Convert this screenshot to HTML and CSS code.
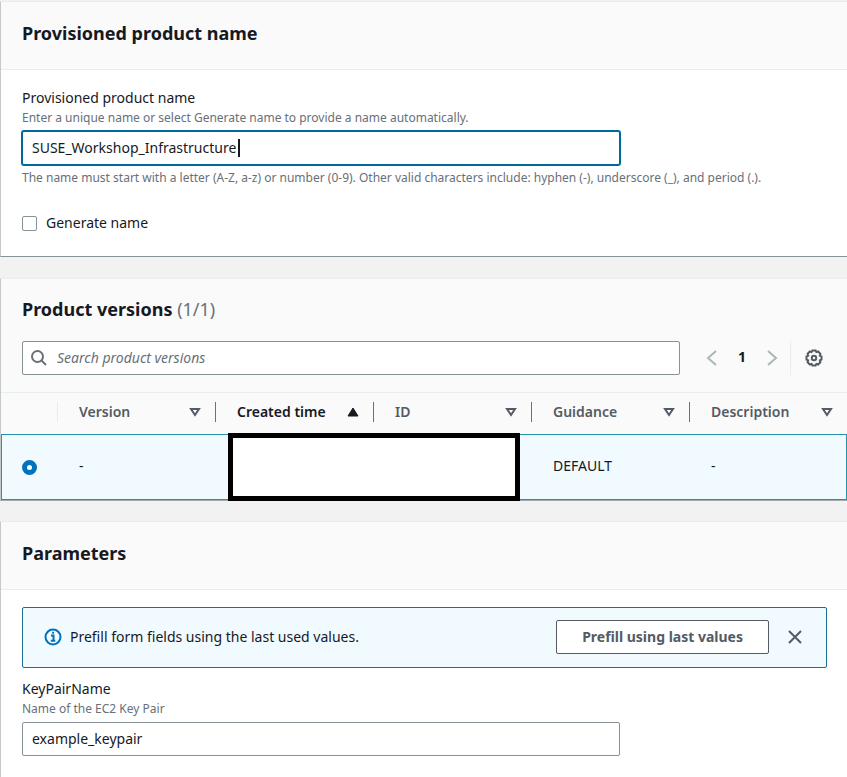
FILE: index.html
```html
<!DOCTYPE html>
<html lang="en">
<head>
<meta charset="utf-8">
<title>Launch product</title>
<meta name="viewport" content="width=device-width, initial-scale=1">
<link rel="stylesheet" href="styles.css">
</head>
<body>
<main class="page">
  <section class="panel">
    <header class="panel-header"><h2>Provisioned product name</h2></header>
    <div class="panel-body">
      <div class="field">
        <label class="label" for="product-name">Provisioned product name</label>
        <p class="hint">Enter a unique name or select Generate name to provide a name automatically.</p>
        <div class="input-wrap">
          <input class="input input-focused" id="product-name" type="text" value="SUSE_Workshop_Infrastructure">
          <span class="caret"></span>
        </div>
        <p class="hint">The name must start with a letter (A-Z, a-z) or number (0-9). Other valid characters include: hyphen (-), underscore (_), and period (.).</p>
      </div>
      <label class="check"><input type="checkbox">Generate name</label>
    </div>
  </section>

  <section class="panel panel-table">
    <div class="versions-header">
      <h2>Product versions <span class="count">(1/1)</span></h2>
      <div class="tools">
        <div class="search">
          <svg class="search-icon" viewBox="0 0 16 16" aria-hidden="true"><circle cx="6.5" cy="6.5" r="5.5"/><path d="M10.5 10.5 15 15"/></svg>
          <input class="input" type="search" aria-label="Search product versions" placeholder="Search product versions">
        </div>
        <nav class="pager" aria-label="Pages">
          <button class="icon-button" type="button" aria-label="Previous page"><svg class="chevron" viewBox="0 0 16 16"><path d="M12 1 4 8l8 7"/></svg></button>
          <button class="icon-button page-number" type="button">1</button>
          <button class="icon-button" type="button" aria-label="Next page"><svg class="chevron" viewBox="0 0 16 16"><path d="m4 1 8 7-8 7"/></svg></button>
        </nav>
        <div class="settings">
          <button class="icon-button" type="button" aria-label="Preferences"><svg class="gear" viewBox="0 0 18 18"><path d="M7.4 1.500h3.200l.8 1.600 1.700-.6 2.300 2.300-.6 1.800 1.700.8v3.200l-1.700.8.6 1.800-2.300 2.300-1.700-.6-.8 1.600H7.400l-.8-1.600-1.700.6-2.300-2.300.6-1.800-1.700-.8V7.400l1.700-.8-.6-1.800 2.300-2.300 1.700.6z"/><circle cx="9" cy="9" r="2.200"/></svg></button>
        </div>
      </div>
    </div>
    <table class="versions">
      <colgroup><col class="col-select"><col><col><col><col><col></colgroup>
      <thead>
        <tr>
          <th aria-label="Select"></th>
          <th><button class="sort" type="button">Version<svg viewBox="0 0 12 10"><path d="M2 2h8L6 8z"/></svg></button></th>
          <th><button class="sort sorted" type="button">Created time<svg viewBox="0 0 12 10"><path d="M6 1 11 9H1z"/></svg></button></th>
          <th><button class="sort" type="button">ID<svg viewBox="0 0 12 10"><path d="M2 2h8L6 8z"/></svg></button></th>
          <th><button class="sort" type="button">Guidance<svg viewBox="0 0 12 10"><path d="M2 2h8L6 8z"/></svg></button></th>
          <th><button class="sort" type="button">Description<svg viewBox="0 0 12 10"><path d="M2 2h8L6 8z"/></svg></button></th>
        </tr>
      </thead>
      <tbody>
        <tr>
          <td><input class="radio" type="radio" name="version" aria-label="Select version" checked></td>
          <td>-</td>
          <td class="masked" colspan="2"><div class="mask"></div></td>
          <td>DEFAULT</td>
          <td>-</td>
        </tr>
      </tbody>
    </table>
  </section>

  <section class="panel panel-last">
    <header class="panel-header"><h2>Parameters</h2></header>
    <div class="panel-body">
      <div class="alert">
        <svg class="info" viewBox="0 0 18 18" aria-hidden="true"><circle cx="9" cy="9" r="7.500"/><path d="M7 7.500h2.500v5M6.800 12.800h4.500"/><path d="M8.200 4.800h1.800"/></svg>
        <p class="alert-text">Prefill form fields using the last used values.</p>
        <button class="button" type="button">Prefill using last values</button>
        <button class="icon-button close" type="button" aria-label="Dismiss"><svg viewBox="0 0 16 16"><path d="m2 2 12 12M14 2 2 14"/></svg></button>
      </div>
      <div class="field">
        <label class="label" for="key-pair">KeyPairName</label>
        <p class="hint">Name of the EC2 Key Pair</p>
        <div class="input-wrap"><input class="input" id="key-pair" type="text" value="example_keypair"></div>
      </div>
    </div>
  </section>
</main>
</body>
</html>
```
FILE: styles.css
```css
* { box-sizing: border-box; }
body {
  margin: 0;
  background: #f2f2f2;
  color: #16191f;
  font: 14px/20px "Noto Sans", "Open Sans", sans-serif;
}
h2, p { margin: 0; }
h2 { font-size: 18px; line-height: 24px; font-weight: 700; }
input, button { font: inherit; color: inherit; }
svg { display: block; fill: none; stroke: currentColor; stroke-width: 2; }

.page { display: flex; flex-direction: column; gap: 21px; padding-top: 1px; min-height: 100vh; }
.panel {
  background: #fff;
  border-top: 1px solid #eaeded;
  border-left: 1px solid #c4c9cb;
  border-bottom: 1px solid #879196;
}
.panel-table { border-bottom: 0; box-shadow: 0 1px #a3abae; }
.panel-last { flex: 1; border-bottom: 0; }
.panel-header { padding: 19px 21px 24px; background: #fafafa; border-bottom: 1px solid #eaeded; }
.panel-body { padding: 17px 20px 23px 21px; }

.field { display: flex; flex-direction: column; }
.label { line-height: 22px; }
.hint { font-size: 12px; line-height: 18px; color: #687078; }
.input {
  display: block;
  width: 100%;
  height: 34px;
  padding: 0 9px 1px;
  background: #fff;
  border: 1px solid #879196;
  border-radius: 2px;
  outline: 0;
}
.input-wrap { position: relative; max-width: 598px; margin: 4px 0; }
.input-focused { border-color: #00699c; box-shadow: 0 0 0 1px #00699c; }
.caret { position: absolute; top: 8px; left: 216px; width: 2px; height: 18px; background: #16191f; }

.check { display: flex; align-items: center; gap: 9px; width: max-content; margin-top: 26px; }
.check input { appearance: none; width: 15px; height: 15px; margin: 0; border: 1px solid #879196; border-radius: 2px; background: #fff; }

.versions-header { padding: 18px 21px 17px; background: #fafafa; border-bottom: 1px solid #eaeded; }
.count { font-weight: 400; color: #687078; }
.tools { display: flex; align-items: center; margin-top: 20px; }
.search { position: relative; flex: 1; }
.search .input { padding-left: 34px; }
.search .input::placeholder { color: #687078; font-style: italic; opacity: 1; }
.search-icon { position: absolute; top: 9px; left: 9px; width: 16px; height: 16px; color: #687078; }
.icon-button { display: flex; align-items: center; justify-content: center; width: 30px; height: 34px; padding: 0; border: 0; background: none; }
.pager { display: flex; margin-left: 17px; }
.chevron { width: 16px; height: 16px; color: #aab7b8; }
.page-number { padding-bottom: 2px; font-weight: 700; }
.settings { margin-left: 3px; padding-left: 8px; border-left: 1px solid #eaeded; margin-right: -3px; }
.gear { width: 18px; height: 18px; color: #545b64; }

.versions { width: 100%; table-layout: fixed; border-collapse: separate; border-spacing: 0; }
.col-select { width: 56px; }
.versions th { height: 41px; padding: 0 0 3px; background: #fafafa; text-align: left; }
.sort {
  display: flex;
  align-items: center;
  justify-content: space-between;
  width: 100%;
  height: 20px;
  padding: 0 14px 0 21px;
  border: 0;
  border-left: 1px solid #687078;
  background: none;
  color: #545b64;
  font-weight: 600;
}
th:nth-child(2) .sort { border-color: #eaeded; }
.sort svg { width: 12px; height: 10px; }
.sorted { color: #16191f; }
.sorted svg { fill: currentColor; stroke-width: 1; }
.versions td { height: 66px; padding: 0 22px 2px; background: #f1faff; border: solid #2293ab; border-width: 1px 0; }
.versions td:first-child { padding: 0 0 0 20px; border-left-width: 1px; }
.versions td:last-child { border-right-width: 1px; }
.radio { display: block; appearance: none; width: 15px; height: 15px; margin: 0; border: 5px solid #0073bb; border-radius: 50%; background: #fff; }
.versions .masked { position: relative; }
.mask { position: absolute; inset: -2px 11px -2px 13px; border: 5px solid #000; background: #fff; }

.alert { display: flex; align-items: center; padding: 12px 16px 13px 21px; margin-bottom: 10px; background: #f1faff; border: 1px solid #1a6f93; border-radius: 2px; }
.info { width: 18px; height: 18px; color: #0073bb; }
.alert-text { flex: 1; margin-left: 8px; }
.button { height: 34px; padding: 0 25px; border: 1px solid #545b64; border-radius: 2px; background: #fff; color: #545b64; font-weight: 700; }
.close { margin-left: 11px; color: #545b64; }
.close svg { width: 16px; height: 16px; }
```
